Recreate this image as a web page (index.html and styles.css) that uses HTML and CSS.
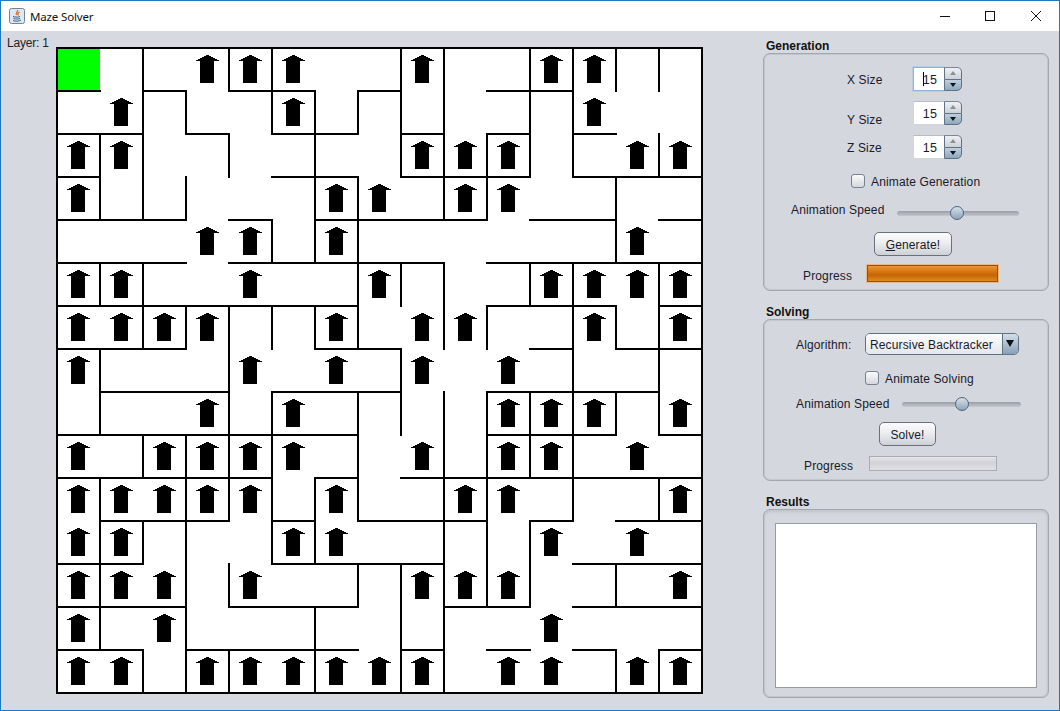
FILE: index.html
```html
<!DOCTYPE html>
<html lang="en">
<head>
    <meta charset="UTF-8">
    <title>Maze Solver</title>
    <link rel="stylesheet" href="styles.css">
</head>
<body>

<div class="window">
    <div class="titlebar">
        <svg class="app-icon" width="16" height="16" viewBox="0 0 16 16">
            <rect x="0.5" y="0.5" width="15" height="15" rx="2" fill="#dfe8f0" stroke="#6f8597"/>
            <path d="M8.5 2c1 1.5-2.5 3-1 5M10.5 4c-1.5 1-2.5 2-1 3.5" fill="none" stroke="#d9661f" stroke-width="1.2"/>
            <path d="M4 8.5c2 .8 6 .8 7 0M4.5 10.5c2 .7 5 .7 6.5 0M4 12.5c2 1 6 1 8-.5" fill="none" stroke="#34618c" stroke-width="1"/>
        </svg>
        <span class="app-title">Maze Solver</span>
        <div class="window-controls">
            <svg width="10" height="10" viewBox="0 0 10 10"><path d="M0 5.5H10" stroke="#111" fill="none"/></svg>
            <svg width="10" height="10" viewBox="0 0 10 10"><rect x="0.5" y="0.5" width="9" height="9" stroke="#111" fill="none"/></svg>
            <svg width="10" height="10" viewBox="0 0 10 10"><path d="M0 0L10 10M10 0L0 10" stroke="#111" fill="none"/></svg>
        </div>
    </div>

    <div class="content">
        <div class="maze-pane">
            <div class="layer-label">Layer: 1</div>
            <svg class="maze" width="649" height="649" viewBox="-2 -2 649 649">
                <defs>
                    <path id="arrow" d="M14 13H9L21.5 7L34 13H28V35H14Z"/>
                </defs>
                <rect class="cell-bg" x="0" y="0" width="645" height="645"/>
                <rect class="cell-start" x="0" y="0" width="43" height="43"/>

                <!-- horizontal walls -->
                <path class="walls" d="
                    M0 43H43M86 43H129M172 43H258M301 43H344M430 43H516
                    M0 86H86M129 86H172M215 86H301M344 86H387M430 86H473M516 86H559
                    M0 129H43M215 129H301M344 129H473M516 129H645
                    M0 172H129M172 172H215M258 172H430M473 172H559M602 172H645
                    M0 215H129M172 215H387M430 215H645
                    M0 258H301M430 258H559M602 258H645
                    M0 301H129M258 301H344M473 301H516M559 301H645
                    M43 344H172M215 344H344M430 344H602
                    M0 387H301M430 387H559M602 387H645
                    M0 430H215M258 430H301M344 430H645
                    M43 473H172M215 473H258M301 473H430M473 473H516M559 473H645
                    M0 516H86M215 516H387M516 516H645
                    M0 559H129M172 559H301M387 559H473M516 559H645
                    M0 602H86M129 602H301M344 602H387M430 602H473M516 602H559M602 602H645"/>

                <!-- vertical walls -->
                <path class="walls" d="
                    M43 86V172M43 215V258M43 301V387M43 430V602
                    M86 0V172M86 215V301M86 387V430M86 473V516M86 602V645
                    M129 43V86M129 129V172M129 258V301M129 387V645
                    M172 0V43M172 86V129M172 258V473M172 516V559M172 602V645
                    M215 0V86M215 172V215M215 258V301M215 344V516
                    M258 43V215M258 258V301M258 430V516M258 559V645
                    M301 43V86M301 129V301M301 344V473M301 516V559
                    M344 0V129M344 215V258M344 301V387M344 516V645
                    M387 0V172M387 215V301M387 344V645
                    M430 86V172M430 258V301M430 344V559
                    M473 0V129M473 215V258M473 344V430M473 473V559
                    M516 0V129M516 215V473
                    M559 0V43M559 129V215M559 258V301M559 344V387M559 516V559M559 602V645
                    M602 0V43M602 86V129M602 215V387M602 430V473M602 602V645"/>

                <rect class="frame" x="0" y="0" width="645" height="645"/>

                <!-- arrows, one line per row -->
                <use href="#arrow" x="129" y="0"/><use href="#arrow" x="172" y="0"/><use href="#arrow" x="215" y="0"/><use href="#arrow" x="344" y="0"/><use href="#arrow" x="473" y="0"/><use href="#arrow" x="516" y="0"/>
                <use href="#arrow" x="43" y="43"/><use href="#arrow" x="215" y="43"/><use href="#arrow" x="516" y="43"/>
                <use href="#arrow" x="0" y="86"/><use href="#arrow" x="43" y="86"/><use href="#arrow" x="344" y="86"/><use href="#arrow" x="387" y="86"/><use href="#arrow" x="430" y="86"/><use href="#arrow" x="559" y="86"/><use href="#arrow" x="602" y="86"/>
                <use href="#arrow" x="0" y="129"/><use href="#arrow" x="258" y="129"/><use href="#arrow" x="301" y="129"/><use href="#arrow" x="387" y="129"/><use href="#arrow" x="430" y="129"/>
                <use href="#arrow" x="129" y="172"/><use href="#arrow" x="172" y="172"/><use href="#arrow" x="258" y="172"/><use href="#arrow" x="559" y="172"/>
                <use href="#arrow" x="0" y="215"/><use href="#arrow" x="43" y="215"/><use href="#arrow" x="172" y="215"/><use href="#arrow" x="301" y="215"/><use href="#arrow" x="473" y="215"/><use href="#arrow" x="516" y="215"/><use href="#arrow" x="559" y="215"/><use href="#arrow" x="602" y="215"/>
                <use href="#arrow" x="0" y="258"/><use href="#arrow" x="43" y="258"/><use href="#arrow" x="86" y="258"/><use href="#arrow" x="129" y="258"/><use href="#arrow" x="258" y="258"/><use href="#arrow" x="344" y="258"/><use href="#arrow" x="387" y="258"/><use href="#arrow" x="516" y="258"/><use href="#arrow" x="602" y="258"/>
                <use href="#arrow" x="0" y="301"/><use href="#arrow" x="172" y="301"/><use href="#arrow" x="258" y="301"/><use href="#arrow" x="344" y="301"/><use href="#arrow" x="430" y="301"/>
                <use href="#arrow" x="129" y="344"/><use href="#arrow" x="215" y="344"/><use href="#arrow" x="430" y="344"/><use href="#arrow" x="473" y="344"/><use href="#arrow" x="516" y="344"/><use href="#arrow" x="602" y="344"/>
                <use href="#arrow" x="0" y="387"/><use href="#arrow" x="86" y="387"/><use href="#arrow" x="129" y="387"/><use href="#arrow" x="172" y="387"/><use href="#arrow" x="215" y="387"/><use href="#arrow" x="344" y="387"/><use href="#arrow" x="430" y="387"/><use href="#arrow" x="473" y="387"/><use href="#arrow" x="559" y="387"/>
                <use href="#arrow" x="0" y="430"/><use href="#arrow" x="43" y="430"/><use href="#arrow" x="86" y="430"/><use href="#arrow" x="129" y="430"/><use href="#arrow" x="172" y="430"/><use href="#arrow" x="258" y="430"/><use href="#arrow" x="387" y="430"/><use href="#arrow" x="430" y="430"/><use href="#arrow" x="602" y="430"/>
                <use href="#arrow" x="0" y="473"/><use href="#arrow" x="43" y="473"/><use href="#arrow" x="215" y="473"/><use href="#arrow" x="258" y="473"/><use href="#arrow" x="473" y="473"/><use href="#arrow" x="559" y="473"/>
                <use href="#arrow" x="0" y="516"/><use href="#arrow" x="43" y="516"/><use href="#arrow" x="86" y="516"/><use href="#arrow" x="172" y="516"/><use href="#arrow" x="344" y="516"/><use href="#arrow" x="387" y="516"/><use href="#arrow" x="430" y="516"/><use href="#arrow" x="602" y="516"/>
                <use href="#arrow" x="0" y="559"/><use href="#arrow" x="86" y="559"/><use href="#arrow" x="473" y="559"/>
                <use href="#arrow" x="0" y="602"/><use href="#arrow" x="43" y="602"/><use href="#arrow" x="129" y="602"/><use href="#arrow" x="172" y="602"/><use href="#arrow" x="215" y="602"/><use href="#arrow" x="258" y="602"/><use href="#arrow" x="301" y="602"/><use href="#arrow" x="344" y="602"/><use href="#arrow" x="430" y="602"/><use href="#arrow" x="473" y="602"/><use href="#arrow" x="559" y="602"/><use href="#arrow" x="602" y="602"/>
            </svg>
        </div>

        <div class="sidebar">
            <div class="group-title">Generation</div>
            <div class="group">
                <div class="row row-x">
                    <span class="size-label">X Size</span>
                    <div class="spinner focused">
                        <div class="spinner-field"><span class="caret"></span>15</div>
                        <div class="spinner-btns"><div class="spin-up"></div><div class="spin-down"></div></div>
                    </div>
                </div>
                <div class="row row-y">
                    <span class="size-label drop-label">Y Size</span>
                    <div class="spinner">
                        <div class="spinner-field">15</div>
                        <div class="spinner-btns"><div class="spin-up"></div><div class="spin-down"></div></div>
                    </div>
                </div>
                <div class="row row-y">
                    <span class="size-label">Z Size</span>
                    <div class="spinner">
                        <div class="spinner-field">15</div>
                        <div class="spinner-btns"><div class="spin-up"></div><div class="spin-down"></div></div>
                    </div>
                </div>
                <div class="row row-check-gen">
                    <span class="checkbox"></span>
                    <span>Animate Generation</span>
                </div>
                <div class="row row-speed-gen">
                    <span class="speed-label">Animation Speed</span>
                    <div class="slider slider-gen"><span class="slider-thumb"></span></div>
                </div>
                <button class="btn btn-generate"><span class="mnemonic">G</span>enerate!</button>
                <div class="row row-progress-gen">
                    <span class="progress-label">Progress</span>
                    <div class="progress progress-full"></div>
                </div>
            </div>

            <div class="group-title group-title-next">Solving</div>
            <div class="group">
                <div class="row row-algo">
                    <span class="algo-label">Algorithm:</span>
                    <div class="combo">
                        <div class="combo-text">Recursive Backtracker</div>
                        <div class="combo-btn"></div>
                    </div>
                </div>
                <div class="row row-check-solve">
                    <span class="checkbox"></span>
                    <span>Animate Solving</span>
                </div>
                <div class="row row-speed-solve">
                    <span class="speed-label">Animation Speed</span>
                    <div class="slider slider-solve"><span class="slider-thumb"></span></div>
                </div>
                <button class="btn btn-solve">Solve!</button>
                <div class="row row-progress-solve">
                    <span class="progress-label">Progress</span>
                    <div class="progress progress-empty"></div>
                </div>
            </div>

            <div class="group-title group-title-next">Results</div>
            <div class="group group-results">
                <div class="results-box"></div>
            </div>
        </div>
    </div>
</div>

</body>
</html>
```

FILE: styles.css
```css
* {
    box-sizing: border-box;
    margin: 0;
    padding: 0;
}

body {
    font-family: "Liberation Sans", Arial, sans-serif;
    font-size: 12px;
    letter-spacing: 0.14px;
    color: #1a1a2a;
    background: #d6d9df;
}

.window {
    width: 1060px;
    height: 711px;
    border: 1px solid #1b78c4;
    display: flex;
    flex-direction: column;
    overflow: hidden;
}

/* Title bar */
.titlebar {
    height: 30px;
    background: #fff;
    display: flex;
    align-items: center;
    padding-left: 8px;
    flex-shrink: 0;
}

.app-title {
    font-family: "Noto Sans", sans-serif;
    font-size: 11.5px;
    letter-spacing: -0.15px;
    color: #111;
    margin-left: 5px;
}

.window-controls {
    margin-left: auto;
    display: flex;
    gap: 36px;
    padding-right: 18px;
}

.window-controls svg:first-child {
    margin-right: -1px;
}

.content {
    flex: 1;
    display: flex;
    justify-content: space-between;
}

/* Maze */
.maze-pane {
    display: flex;
    padding: 5px 0 0 6px;
}

.layer-label {
    width: 48px;
    line-height: 14px;
    letter-spacing: -0.2px;
    color: #222;
}

.maze {
    display: block;
    margin-top: 10px;
}

.cell-bg {
    fill: #fff;
}

.cell-start {
    fill: #00ff00;
}

.walls, .frame {
    fill: none;
    stroke: #000;
    stroke-width: 2;
    shape-rendering: crispEdges;
}

.walls {
    stroke-linecap: square;
}

#arrow {
    fill: #000;
    shape-rendering: crispEdges;
}

/* Right column */
.sidebar {
    width: 286px;
    margin-right: 10px;
    padding-top: 7px;
}

.group-title {
    height: 15px;
    line-height: 16px;
    font-weight: bold;
    letter-spacing: 0;
    color: #111;
    padding-left: 3px;
}

.group-title-next {
    margin-top: 13px;
}

.group {
    border: 1px solid #a3a7ae;
    border-radius: 7px;
    box-shadow: inset 0 0 0 1px #c3c6cc;
    background: #d4d7dd;
    padding: 1px 1px 8px;
}

.row {
    display: flex;
    align-items: center;
}

.size-label {
    width: 66px;
}

.drop-label {
    margin-top: 13px;
}

.row-x {
    height: 25px;
    margin-top: 12px;
    padding-left: 82px;
}

.row-y {
    height: 25px;
    margin-top: 9px;
    padding-left: 82px;
}

/* Spinner */
.spinner {
    display: flex;
    align-self: flex-start;
    width: 49px;
    height: 24px;
}

.spinner-field {
    width: 31px;
    background: #fff;
    border: 1px solid #d2d5da;
    border-top-color: #b9bdc4;
    border-right: 0;
    text-align: right;
    padding-right: 7px;
    line-height: 24px;
    font-size: 12.5px;
    position: relative;
}

.focused .spinner-field {
    border-color: #8fb3d6;
    box-shadow: 0 0 0 1px #b9cde0;
}

.caret {
    position: absolute;
    left: 9px;
    top: 4px;
    width: 1px;
    height: 14px;
    background: #000;
}

.spinner-btns {
    width: 18px;
    display: flex;
    flex-direction: column;
}

.spin-up, .spin-down {
    flex: 1;
    position: relative;
    border: 1px solid #5f7284;
}

.spin-up {
    background: linear-gradient(#eef0f3, #cdd2d8);
    border-bottom: 0;
    border-top-color: #7b8996;
    border-top-right-radius: 5px;
}

.spin-down {
    background: linear-gradient(#bfd0df, #8fa7bd);
    border-bottom-right-radius: 5px;
}

.spin-up::after, .spin-down::after {
    content: "";
    position: absolute;
    left: 5px;
    border-left: 3px solid transparent;
    border-right: 3px solid transparent;
}

.spin-up::after {
    top: 3px;
    border-bottom: 4px solid #8a8f96;
}

.spin-down::after {
    top: 3px;
    border-top: 4px solid #111;
}

/* Check rows */
.checkbox {
    width: 14px;
    height: 14px;
    border: 1px solid #76828f;
    border-radius: 3px;
    background: linear-gradient(#fbfbfc, #d3d7dc);
    margin-right: 6px;
}

.checkbox + span {
    margin-top: 2px;
}

.row-check-gen {
    height: 18px;
    margin-top: 12px;
    padding-left: 86px;
}

.row-check-solve {
    height: 18px;
    margin-top: 14px;
    padding-left: 100px;
}

/* Slider */
.speed-label {
    width: 106px;
}

.row-speed-gen {
    height: 18px;
    margin-top: 11px;
    padding-left: 26px;
}

.row-speed-solve {
    height: 18px;
    margin-top: 8px;
    padding-left: 31px;
}

.slider {
    position: relative;
    height: 5px;
    border-radius: 3px;
    background: linear-gradient(#989ea8, #c4c8ce);
}

.slider-gen {
    width: 122px;
    margin-top: 6px;
}

.slider-solve {
    width: 119px;
}

.slider-thumb {
    position: absolute;
    top: -5px;
    left: 53px;
    width: 14px;
    height: 14px;
    border: 1px solid #506679;
    border-radius: 50%;
    background: linear-gradient(#d5e0ea, #8ea5ba);
}

/* Buttons */
.btn {
    display: block;
    height: 24px;
    padding-top: 2px;
    font: inherit;
    letter-spacing: inherit;
    color: inherit;
    border: 1px solid #68727d;
    border-radius: 5px;
    background: linear-gradient(#fcfcfd, #e9ebee 50%, #cdd1d6);
}

.mnemonic {
    text-decoration: underline;
}

.btn-generate {
    width: 78px;
    margin: 13px 0 0 109px;
}

.btn-solve {
    width: 57px;
    margin: 9px 0 0 114px;
}

/* Progress */
.progress {
    border: 1px solid #a9acb2;
}

.progress-label {
    width: 64px;
    margin-top: 5px;
}

.row-progress-gen {
    height: 17px;
    margin-top: 9px;
    padding-left: 38px;
}

.row-progress-solve {
    height: 15px;
    margin: 10px 0 1px;
    padding-left: 39px;
}

.row-progress-solve .progress-label {
    width: 65px;
}

.progress-full {
    width: 131px;
    height: 17px;
    border-color: #a04c08;
    box-shadow: 0 0 0 1px #e5b98c;
    background: linear-gradient(#e9963a, #d9780f 35%, #c46508 60%, #e08a1f);
}

.progress-empty {
    width: 128px;
    height: 15px;
    background: linear-gradient(#e2e4e7, #d0d3d8 45%, #dfe1e4);
}

/* Algorithm */
.algo-label {
    width: 69px;
    margin-top: 2px;
}

.row-algo {
    margin-top: 12px;
    padding-left: 31px;
}

.combo {
    width: 154px;
    height: 22px;
    display: flex;
    border: 1px solid #5f7284;
    border-radius: 5px;
    overflow: hidden;
}

.combo-text {
    flex: 1;
    padding-left: 4px;
    line-height: 22px;
    background: linear-gradient(#fbfcfd, #e4e7eb);
}

.combo-btn {
    width: 16px;
    position: relative;
    border-left: 1px solid #5f7284;
    background: linear-gradient(#d4dfe8, #87a0b8);
}

.combo-btn::after {
    content: "";
    position: absolute;
    left: 3px;
    top: 6px;
    border-left: 4px solid transparent;
    border-right: 4px solid transparent;
    border-top: 7px solid #111;
}

/* Results */
.group-results {
    height: 189px;
    padding: 13px 11px 9px;
    box-shadow: inset 0 0 0 1px #c3c6cc, inset 0 2px 3px #bfc2c8;
}

.results-box {
    height: 165px;
    background: #fff;
    border: 1px solid #979ba3;
}
```
